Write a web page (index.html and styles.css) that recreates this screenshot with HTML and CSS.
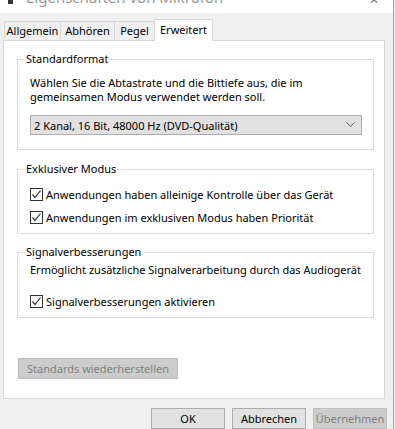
FILE: index.html
```html
<!DOCTYPE html>
<html lang="de">
<head>
<meta charset="utf-8">
<link rel="stylesheet" href="styles.css">
</head>
<body>
<div class="window">
  <div class="titlebar">
    <span class="ticon"></span>
    <span class="title">Eigenschaften von Mikrofon</span>
    <span class="close">✕</span>
  </div>
  <div class="tabs">
    <div class="tab">Allgemein</div>
    <div class="tab">Abhören</div>
    <div class="tab">Pegel</div>
    <div class="tab active">Erweitert</div>
  </div>
  <div class="panel">
    <fieldset class="group g1">
      <legend>Standardformat</legend>
      <p class="desc">Wählen Sie die Abtastrate und die Bittiefe aus, die im<br>gemeinsamen Modus verwendet werden soll.</p>
      <div class="select">
        <span>2 Kanal, 16 Bit, 48000 Hz (DVD-Qualität)</span>
        <svg class="chev" width="9" height="6" viewBox="0 0 9 6"><polyline points="0.5,0.5 4.5,4.5 8.5,0.5" fill="none" stroke="#606060" stroke-width="1"/></svg>
      </div>
    </fieldset>
    <fieldset class="group g2">
      <legend>Exklusiver Modus</legend>
      <div class="check"><span class="box"><svg width="11" height="11" viewBox="0 0 11 11"><polyline points="1.5,5.5 4,8.5 9.5,1.5" fill="none" stroke="#333" stroke-width="1.2"/></svg></span>Anwendungen haben alleinige Kontrolle über das Gerät</div>
      <div class="check"><span class="box"><svg width="11" height="11" viewBox="0 0 11 11"><polyline points="1.5,5.5 4,8.5 9.5,1.5" fill="none" stroke="#333" stroke-width="1.2"/></svg></span>Anwendungen im exklusiven Modus haben Priorität</div>
    </fieldset>
    <fieldset class="group g3">
      <legend>Signalverbesserungen</legend>
      <p class="desc one">Ermöglicht zusätzliche Signalverarbeitung durch das Audiogerät</p>
      <div class="check"><span class="box"><svg width="11" height="11" viewBox="0 0 11 11"><polyline points="1.5,5.5 4,8.5 9.5,1.5" fill="none" stroke="#333" stroke-width="1.2"/></svg></span>Signalverbesserungen aktivieren</div>
    </fieldset>
    <div class="btn disabled restore">Standards wiederherstellen</div>
  </div>
  <div class="buttons">
    <div class="btn">OK</div>
    <div class="btn">Abbrechen</div>
    <div class="btn disabled">Übernehmen</div>
  </div>
</div>
</body>
</html>
```
FILE: styles.css
```css
html, body {
  margin: 0;
  padding: 0;
}
body {
  width: 395px;
  height: 429px;
  overflow: hidden;
  background: #f0f0f0;
  font-family: "Segoe UI", "Noto Sans", "Liberation Sans", sans-serif;
  font-size: 11px;
  color: #000;
}
.window {
  width: 393px;
  height: 429px;
  border-right: 1px solid #a0a0a0;
  background: #f0f0f0;
  display: flex;
  flex-direction: column;
}
.titlebar {
  height: 13px;
  background: #fff;
  position: relative;
  overflow: hidden;
  flex: none;
}
.ticon {
  position: absolute;
  left: 8px;
  top: -2px;
  width: 5px;
  height: 6px;
  background: #333;
}
.title {
  position: absolute;
  left: 26px;
  top: -13px;
  font-size: 15px;
  color: #999;
}
.close {
  position: absolute;
  right: 14px;
  top: -9px;
  font-size: 12px;
  color: #777;
}
.tabs {
  display: flex;
  padding-left: 4px;
  margin-top: 8px;
  height: 19px;
  align-items: flex-end;
  flex: none;
}
.tab {
  border: 1px solid #d9d9d9;
  border-bottom: none;
  border-right: none;
  padding: 0;
  text-align: center;
  background: #f0f0f0;
  box-sizing: border-box;
  height: 19px;
  line-height: 18px;
}
.tab:nth-child(1) { width: 56px; }
.tab:nth-child(2) { width: 54px; }
.tab:nth-child(3) { width: 40px; }
.tab.active {
  width: 59px;
  height: 22px;
  margin-bottom: -1px;
  background: #fff;
  border-right: 1px solid #d9d9d9;
  position: relative;
  z-index: 1;
  line-height: 19px;
}
.panel {
  margin-left: 3px;
  width: 382px;
  height: 359px;
  box-sizing: border-box;
  border: 1px solid #d9d9d9;
  background: #fff;
  padding: 11px 10px 0 13px;
  display: flex;
  flex-direction: column;
  flex: none;
}
.group {
  margin: 0;
  border: 1px solid #dcdcdc;
  padding: 0 10px 0 12px;
  min-width: 0;
}
.group legend {
  padding: 0 1px;
  margin-left: -5px;
  line-height: 14px;
}
.g1 { padding-bottom: 14px; }
.g2 { margin-top: 12px; padding-bottom: 9px; }
.g3 { margin-top: 11px; padding-bottom: 9px; }
.desc {
  margin: 10px 0 0 0;
  line-height: 14px;
}
.desc.one { margin-top: 4px; }
.select {
  margin-top: 11px;
  height: 20px;
  box-sizing: border-box;
  border: 1px solid #adadad;
  background: #e1e1e1;
  display: flex;
  align-items: center;
  justify-content: space-between;
  padding: 0 6px 0 3px;
  margin-right: 1px;
}
.chev { display: block; }
.check {
  display: flex;
  align-items: center;
  height: 13px;
  line-height: 13px;
  margin-top: 10px;
  gap: 3px;
}
.g2 .check:first-of-type { margin-top: 12px; }
.g3 .check { margin-top: 18px; }
.box {
  width: 13px;
  height: 13px;
  box-sizing: border-box;
  border: 1px solid #333;
  background: #fff;
  display: flex;
  align-items: center;
  justify-content: center;
  flex: none;
}
.box svg { display: block; }
.btn {
  width: 74px;
  height: 21px;
  box-sizing: border-box;
  border: 1px solid #adadad;
  background: #e1e1e1;
  display: flex;
  align-items: center;
  justify-content: center;
  line-height: 19px;
}
.btn.disabled {
  border-color: #bfbfbf;
  background: #cccccc;
  color: #838383;
}
.restore {
  width: 160px;
  margin-top: 40px;
  margin-left: 1px;
}
.buttons {
  display: flex;
  justify-content: flex-end;
  gap: 7px;
  padding-right: 6px;
  margin-top: 9px;
  flex: none;
}
```
